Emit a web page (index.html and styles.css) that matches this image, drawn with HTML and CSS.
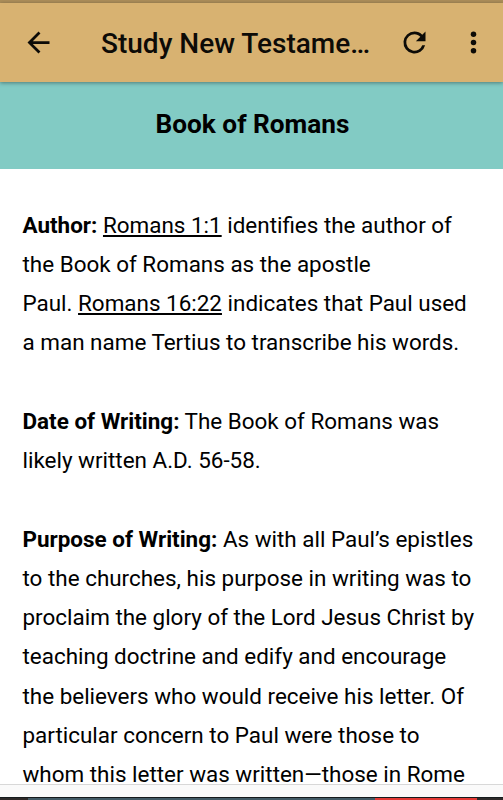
FILE: index.html
```html
<!DOCTYPE html>
<html lang="en">
<head>
<meta charset="utf-8">
<title>Study New Testament</title>
<link rel="stylesheet" href="styles.css">
</head>
<body>
<div class="screen">
<div class="status"></div>
<header class="bar">
<svg class="back" viewBox="0 0 24 24"><path d="M20 11H7.83l5.59-5.59L12 4l-8 8 8 8 1.41-1.41L7.83 13H20v-2z"/></svg>
<h1 class="title">Study New Testame…</h1>
<svg class="refresh" viewBox="0 0 24 24"><path d="M17.65 6.35A7.96 7.96 0 0 0 12 4a8 8 0 1 0 7.73 10h-2.08A6 6 0 1 1 12 6c1.66 0 3.14.69 4.22 1.78L13 11h7V4z"/></svg>
<svg class="more" viewBox="0 0 24 24"><circle cx="12" cy="6" r="2"/><circle cx="12" cy="12" r="2"/><circle cx="12" cy="18" r="2"/></svg>
</header>
<h2 class="book">Book of Romans</h2>
<main class="content">
<p><span class="line"><b>Author:</b> <u>Romans 1:1</u> identifies the author of</span>
<span class="line">the Book of Romans as the apostle</span>
<span class="line">Paul. <u>Romans 16:22</u> indicates that Paul used</span>
<span class="line">a man name Tertius to transcribe his words.</span></p>
<p><span class="line"><b>Date of Writing:</b> The Book of Romans was</span>
<span class="line">likely written A.D. 56-58.</span></p>
<p><span class="line"><b>Purpose of Writing:</b> As with all Paul’s epistles</span>
<span class="line">to the churches, his purpose in writing was to</span>
<span class="line">proclaim the glory of the Lord Jesus Christ by</span>
<span class="line">teaching doctrine and edify and encourage</span>
<span class="line">the believers who would receive his letter. Of</span>
<span class="line">particular concern to Paul were those to</span>
<span class="line">whom this letter was written—those in Rome</span></p>
</main>
<footer class="bottom"><div class="strip"></div></footer>
</div>
</body>
</html>
```
FILE: styles.css
```css
* { box-sizing: border-box; }
body { margin: 0; font-family: Roboto, sans-serif; color: #000; background: #fff; }
.screen { width: 503px; height: 800px; overflow: hidden; display: flex; flex-direction: column; }
.status { height: 3px; background: #ac8e5a; flex: none; }
.bar { height: 79px; flex: none; display: flex; align-items: center; background: #d8b271; padding-left: 22px; box-shadow: 0 1px 4px rgba(0,0,0,.4); position: relative; z-index: 1; }
.bar svg { width: 33px; height: 33px; fill: #0d0b07; flex: none; }
.title { margin: 2px 0 0 46px; width: 297px; font-size: 28px; font-weight: 500; white-space: nowrap; color: #0d0b07; }
.bar .more { margin-left: 26px; }
.book { margin: 0; height: 86.5px; flex: none; background: #82cbc4; font-size: 26.2px; font-weight: 700; text-align: center; line-height: 85px; padding-left: 2px; }
.content { flex: 1; min-height: 0; padding: 37.2px 22.5px 0; }
.content p { margin: 0 0 39.25px; font-size: 22.45px; line-height: 39.25px; }
.content p:last-child { margin-bottom: 0; }
.line { display: block; white-space: nowrap; }
.bottom { height: 16px; flex: none; border-top: 1px solid #d8d8d8; background: #fafafa; padding-top: 12px; z-index: 1; }
.strip { height: 3px; border-top: 1px solid #151a1c; background: linear-gradient(to right, #2d2928 28px, #435b66 28px, #435b66 375px, #e53935 375px, #e53935 477px, #2d2928 477px); }
```
